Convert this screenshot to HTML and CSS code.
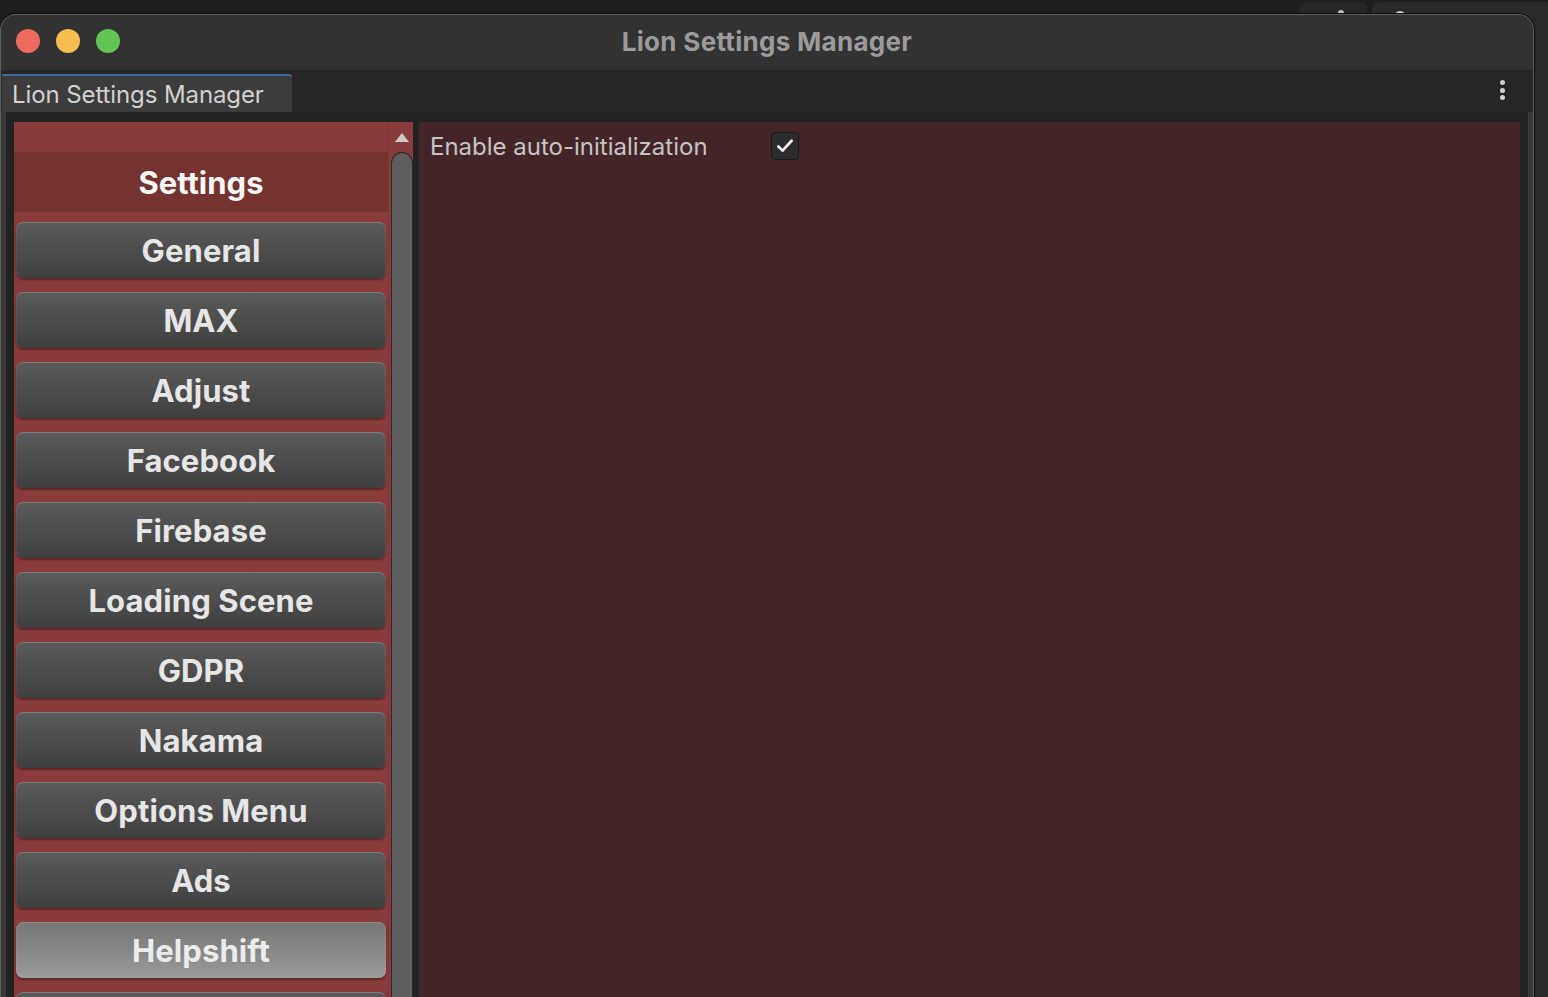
FILE: index.html
```html
<!DOCTYPE html>
<html>
<head>
<meta charset="utf-8">
<link rel="stylesheet" href="styles.css">
</head>
<body>
<div class="desktop">
  <div class="back-tab"><span class="back-dot"></span></div>
  <div class="back-window"><span class="back-dot back-dot2"></span></div>

  <div class="window">
    <div class="titlebar">
      <div class="lights">
        <span class="light red"></span>
        <span class="light yellow"></span>
        <span class="light green"></span>
      </div>
      <div class="title">Lion Settings Manager</div>
    </div>

    <div class="tabbar">
      <div class="tab">Lion Settings Manager</div>
      <div class="kebab"><span></span><span></span><span></span></div>
    </div>

    <div class="frame">
      <div class="sidebar">
        <div class="list">
          <div class="list-head">Settings</div>
          <div class="btn">General</div>
          <div class="btn">MAX</div>
          <div class="btn">Adjust</div>
          <div class="btn">Facebook</div>
          <div class="btn">Firebase</div>
          <div class="btn">Loading Scene</div>
          <div class="btn">GDPR</div>
          <div class="btn">Nakama</div>
          <div class="btn">Options Menu</div>
          <div class="btn">Ads</div>
          <div class="btn btn-active">Helpshift</div>
          <div class="btn"></div>
        </div>
        <div class="scrollbar">
          <div class="arrow-up"></div>
          <div class="thumb"></div>
        </div>
      </div>

      <div class="content">
        <div class="row">
          <span class="label">Enable auto-initialization</span>
          <span class="checkbox">
            <svg width="22" height="22" viewBox="0 0 20 20"><path d="M4 10.5 L7.8 14.2 L16 5.2" fill="none" stroke="#f4f4f4" stroke-width="2.5" stroke-linecap="round" stroke-linejoin="round"/></svg>
          </span>
        </div>
      </div>
    </div>
  </div>
</div>
</body>
</html>
```

FILE: styles.css
```css
html, body {
  margin: 0;
  padding: 0;
  width: 1548px;
  height: 997px;
  overflow: hidden;
  background: #1e1e1e;
  font-family: "Inter", "Noto Sans", sans-serif;
}

.desktop {
  position: relative;
  width: 1548px;
  height: 997px;
  overflow: hidden;
}

.back-tab {
  position: absolute;
  left: 1300px;
  top: 2px;
  width: 67px;
  height: 40px;
  background: #262626;
  border-radius: 6px 6px 0 0;
}

.back-window {
  position: absolute;
  left: 1372px;
  top: 2px;
  width: 200px;
  height: 1000px;
  background: #2a2a2a;
  border-radius: 8px 0 0 0;
}

.back-dot {
  position: absolute;
  left: 38px;
  top: 8px;
  width: 6px;
  height: 6px;
  border-radius: 50%;
  background: #bdbdbd;
}

.back-dot2 {
  left: 22px;
  top: 9px;
  width: 12px;
  height: 12px;
  background: #cfcfcf;
}

.window {
  position: absolute;
  left: 0;
  top: 14px;
  width: 1534px;
  height: 1000px;
  box-sizing: border-box;
  border: 1px solid #5f5f5f;
  border-bottom: none;
  border-radius: 16px 16px 0 0;
  box-shadow: 0 0 0 1px #0c0c0c;
  background: #383838;
  display: flex;
  flex-direction: column;
  overflow: hidden;
}

.titlebar {
  height: 55px;
  flex: none;
  background: #323232;
  position: relative;
  display: flex;
  align-items: center;
  justify-content: center;
}

.lights {
  position: absolute;
  left: 15px;
  top: 14px;
  display: flex;
  gap: 16px;
}

.light {
  width: 24px;
  height: 24px;
  border-radius: 50%;
  display: block;
}
.red { background: #ee6a5e; }
.yellow { background: #f5be4f; }
.green { background: #61c554; }

.title {
  color: #9b9b9b;
  font-weight: 700;
  font-size: 26px;
  letter-spacing: 0.3px;
  margin-left: 0;
  margin-top: -2px;
}

.tabbar {
  height: 42px;
  flex: none;
  background: #262626;
  display: flex;
  align-items: flex-end;
  position: relative;
}

.tab {
  margin-left: 1px;
  width: 290px;
  height: 36px;
  box-sizing: content-box;
  border-top: 2px solid #3d6a9e;
  border-radius: 0 3px 0 0;
  background: #3c3c3c;
  color: #d2d2d2;
  font-size: 24px;
  line-height: 38px;
  text-indent: 10px;
  white-space: nowrap;
  letter-spacing: -0.1px;
}

.kebab {
  position: absolute;
  right: 28px;
  top: 10px;
  display: flex;
  flex-direction: column;
  gap: 2.5px;
}
.kebab span {
  width: 5px;
  height: 5px;
  border-radius: 50%;
  background: #cfcfcf;
  display: block;
}

.frame {
  flex: 1;
  margin: 0 5px 0 5px;
  background: #222222;
  padding: 10px 8px 0 8px;
  display: flex;
  gap: 6px;
  min-height: 0;
}

.sidebar {
  width: 399px;
  flex: none;
  background: #8a3b3b;
  display: flex;
}

.list {
  width: 374px;
  flex: none;
  padding-top: 30px;
  display: flex;
  flex-direction: column;
}

.list-head {
  flex: none;
  height: 60px;
  background: #74332f;
  color: #f7f7f7;
  font-weight: 700;
  font-size: 31px;
  display: flex;
  align-items: center;
  justify-content: center;
  margin-bottom: 10px;
}

.btn {
  flex: none;
  height: 56px;
  margin: 0 2px 14px 2px;
  box-sizing: border-box;
  border-radius: 7px;
  border-top: 1px solid #7c7c7c;
  background: linear-gradient(to bottom, #5b5b5b 0%, #4b4b4b 55%, #3f3f3f 100%);
  box-shadow: 0 2px 2px rgba(0, 0, 0, 0.35), inset 1px 0 0 rgba(255,255,255,0.06), inset -1px 0 0 rgba(255,255,255,0.06);
  color: #e6e6e6;
  font-weight: 700;
  font-size: 31px;
  display: flex;
  align-items: center;
  justify-content: center;
  letter-spacing: 0.1px;
}

.btn-active {
  border-top: 1px solid #8a8a8a;
  background: linear-gradient(to bottom, #797979 0%, #868686 50%, #9d9d9d 100%);
  color: #ececec;
}

.scrollbar {
  width: 25px;
  flex: none;
  box-sizing: border-box;
  border-left: 1px solid #7c3535;
  display: flex;
  flex-direction: column;
  align-items: center;
}

.arrow-up {
  margin-top: 11px;
  width: 0;
  height: 0;
  border-left: 7px solid transparent;
  border-right: 7px solid transparent;
  border-bottom: 9px solid #cbcbcb;
  margin-left: 1px;
}

.thumb {
  margin-top: 10px;
  margin-left: 2px;
  width: 22px;
  flex: 1;
  box-sizing: border-box;
  background: #5e5e5e;
  border: 1px solid #2a2a2a;
  border-bottom: none;
  border-radius: 11px 11px 0 0;
}

.content {
  flex: 1;
  background: #442527;
  padding: 10px 10px 10px 11px;
}

.row {
  display: flex;
  align-items: center;
  height: 28px;
}

.label {
  width: 341px;
  color: #c4c4c4;
  font-size: 24px;
  white-space: nowrap;
}

.checkbox {
  width: 28px;
  height: 28px;
  box-sizing: border-box;
  background: #2b2b2b;
  border: 1px solid #181818;
  border-radius: 4px;
  display: flex;
  align-items: center;
  justify-content: center;
}
```
